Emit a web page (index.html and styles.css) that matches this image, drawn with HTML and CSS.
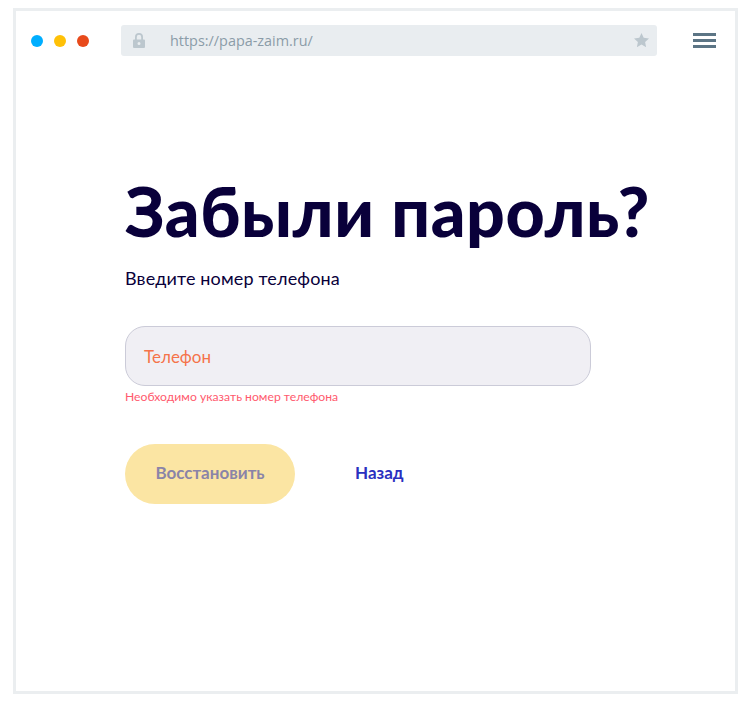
FILE: index.html
```html
<!DOCTYPE html>
<html lang="en">
<head>
    <meta charset="UTF-8">
    <meta name="viewport" content="width=device-width, initial-scale=1.0">
    <title>Забыли пароль?</title>
    <link rel="stylesheet" href="styles.css">
</head>
<body>

<div class="browser">
    <div class="topbar">
        <div class="dots">
            <span class="dot dot-blue"></span>
            <span class="dot dot-yellow"></span>
            <span class="dot dot-red"></span>
        </div>
        <div class="address">
            <svg class="lock" width="12" height="15" viewBox="0 0 12 15">
                <path d="M2 7V4a4 4 0 0 1 8 0v3H8.2V4a2.2 2.2 0 0 0-4.4 0v3z" fill="#bcc7ce"/>
                <path fill-rule="evenodd" d="M1 6.500h10a1 1 0 0 1 1 1V14a1 1 0 0 1-1 1H1a1 1 0 0 1-1-1V7.500a1 1 0 0 1 1-1zm5 2.500a1.500 1.500 0 1 0 0 3 1.500 1.500 0 0 0 0-3z" fill="#bcc7ce"/>
            </svg>
            <span class="url">https://papa-zaim.ru/</span>
            <svg class="star" width="15" height="14" viewBox="0 0 15 14">
                <path d="M7.500 0l2.200 4.800 5.300.6-3.900 3.600 1 5.200-4.600-2.600-4.600 2.600 1-5.200L0 5.400l5.300-.6z" fill="#bcc7ce"/>
            </svg>
        </div>
        <div class="menu">
            <span></span>
            <span></span>
            <span></span>
        </div>
    </div>

    <div class="content">
        <h1>Забыли пароль?</h1>
        <p class="lead">Введите номер телефона</p>
        <div class="field">Телефон</div>
        <div class="error">Необходимо указать номер телефона</div>
        <div class="actions">
            <button class="submit" type="button">Восстановить</button>
            <a class="back" href="#">Назад</a>
        </div>
    </div>
</div>

</body>
</html>
```

FILE: styles.css
```css
body {
    font-family: Lato, "Noto Sans", sans-serif;
    background-color: #fff;
    margin: 0;
    padding: 8px 13px 15px;
}
.browser {
    box-sizing: border-box;
    height: 686px;
    width: 725px;
    border: 3px solid #ebeef0;
}
.topbar {
    display: flex;
    align-items: center;
    padding: 14px 18px 0 15px;
}
.dots {
    display: flex;
    gap: 11px;
    width: 90px;
}
.dot {
    width: 12px;
    height: 12px;
    border-radius: 50%;
}
.dot-blue {
    background-color: #00aeff;
}
.dot-yellow {
    background-color: #ffc107;
}
.dot-red {
    background-color: #e84a1b;
}
.address {
    display: flex;
    align-items: center;
    width: 536px;
    height: 31px;
    padding: 0 8px 0 12px;
    box-sizing: border-box;
    background-color: #e9edf0;
    border-radius: 3px;
}
.url {
    flex: 1;
    margin-left: 25px;
    font-family: "Open Sans", sans-serif;
    font-size: 14.4px;
    color: #8b9ca8;
}
.star {
    margin-top: -2px;
}
.menu {
    margin-left: 36px;
    display: flex;
    flex-direction: column;
    gap: 3px;
}
.menu span {
    display: block;
    width: 23px;
    height: 3px;
    background-color: #5c7585;
}
.content {
    padding: 0 0 0 109px;
}
h1 {
    margin: 111px 0 0;
    font-size: 68px;
    line-height: 88px;
    font-weight: 900;
    letter-spacing: 0.55px;
    color: #09003a;
    white-space: nowrap;
}
.lead {
    margin: 11px 0 0;
    font-size: 18px;
    line-height: 24px;
    letter-spacing: 0.15px;
    color: #09003a;
}
.field {
    box-sizing: border-box;
    width: 466px;
    height: 60px;
    margin-top: 36px;
    padding: 0 18px;
    display: flex;
    align-items: center;
    font-size: 17px;
    color: #f5734a;
    background-color: #f0eff4;
    border: 1px solid #cbcbd8;
    border-radius: 20px;
}
.error {
    margin-top: 4px;
    font-size: 12.2px;
    line-height: 14px;
    color: #ff5a6e;
}
.actions {
    display: flex;
    align-items: center;
    gap: 60px;
    margin-top: 40px;
}
.submit {
    width: 170px;
    height: 60px;
    padding: 0 0 3px;
    font-family: inherit;
    font-size: 17px;
    font-weight: 700;
    color: #8a84a8;
    background-color: #fbe5a3;
    border: none;
    border-radius: 30px;
}
.back {
    margin-top: -3px;
    font-size: 17px;
    font-weight: 700;
    color: #2a2fc0;
    text-decoration: none;
}
```
